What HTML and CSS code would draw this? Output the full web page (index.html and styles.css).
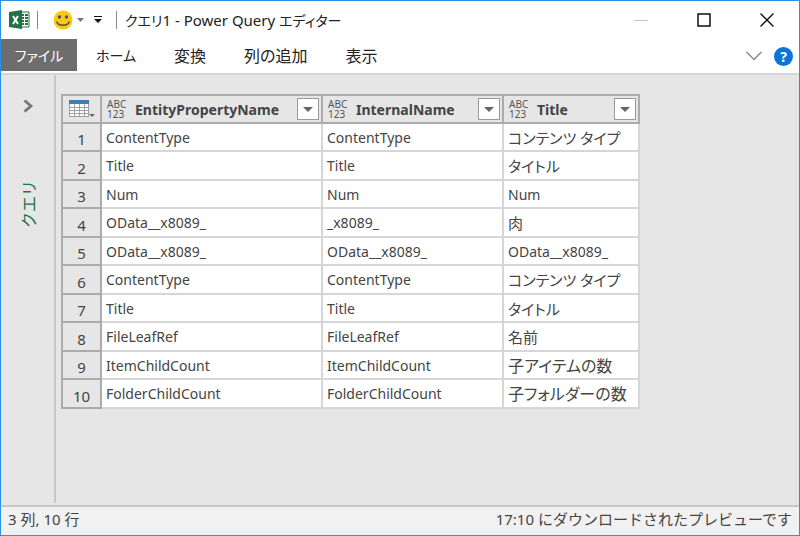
FILE: index.html
```html
<!DOCTYPE html>
<html lang="ja">
<head>
    <meta charset="UTF-8">
    <meta name="viewport" content="width=device-width, initial-scale=1.0">
    <title>クエリ1 - Power Query エディター</title>
    <link rel="stylesheet" href="styles.css">
</head>
<body>
    <div class="window">
        <header class="title-bar">
            <svg class="excel-icon" width="22" height="22" viewBox="0 0 22 22">
                <path d="M11 3h9v15h-9z" fill="#fff" stroke="#217346"/>
                <path d="M12 6h3M16 6h3M12 9h3M16 9h3M12 12h3M16 12h3M12 15h3M16 15h3" stroke="#217346" stroke-width="2"/>
                <path d="M0 3L13 1v19L0 18z" fill="#217346"/>
                <path d="M4 7l5 8M9 7l-5 8" stroke="#fff" stroke-width="2"/>
            </svg>
            <span class="separator"></span>
            <button class="smile-btn" aria-label="フィードバック">
                <svg width="32" height="20" viewBox="0 0 32 20">
                    <circle cx="10" cy="10" r="9.5" fill="#fdc811"/>
                    <circle cx="6.5" cy="7" r="1.7" fill="#505050"/>
                    <circle cx="13.5" cy="7" r="1.7" fill="#505050"/>
                    <path d="M3.5 11.5c2 5 11 5 13 0" fill="none" stroke="#505050" stroke-width="1.5"/>
                    <path d="M24 8h7l-3.500 4z" fill="#777"/>
                </svg>
            </button>
            <button class="quick-btn" aria-label="クイック アクセス">
                <svg width="8" height="8" viewBox="0 0 8 8">
                    <path d="M0 0h8v1H0zM0 3h8L4 7z" fill="#111"/>
                </svg>
            </button>
            <span class="separator"></span>
            <h1 class="title"><span class="kana">クエリ</span>1 - Power Query <span class="kana">エディター</span></h1>
            <div class="window-buttons">
                <button aria-label="最小化">
                    <svg width="14" height="14" viewBox="0 0 14 14"><path d="M0 7.500h14" stroke="#c4c4c4"/></svg>
                </button>
                <button aria-label="最大化">
                    <svg width="14" height="14" viewBox="0 0 14 14"><path d="M1 1h12v12H1z" fill="none" stroke="#111" stroke-width="1.500"/></svg>
                </button>
                <button aria-label="閉じる">
                    <svg width="14" height="14" viewBox="0 0 14 14"><path d="M.5.5l13 13M13.500.5l-13 13" stroke="#111" stroke-width="1.400"/></svg>
                </button>
            </div>
        </header>

        <nav class="ribbon">
            <button class="tab file kana">ファイル</button>
            <button class="tab kana">ホーム</button>
            <button class="tab">変換</button>
            <button class="tab">列の追加</button>
            <button class="tab">表示</button>
            <div class="ribbon-tools">
                <button aria-label="リボンの展開">
                    <svg width="16" height="10" viewBox="0 0 16 10"><path d="M.5 1L8 8.500 15.500 1" fill="none" stroke="#888" stroke-width="1.500"/></svg>
                </button>
                <button class="help-btn" aria-label="ヘルプ">?</button>
            </div>
        </nav>

        <main class="content">
            <aside class="query-pane">
                <button aria-label="展開">
                    <svg width="12" height="14" viewBox="0 0 12 14"><path d="M2.500 1.500L9 7l-6.500 5.500" fill="none" stroke="#777" stroke-width="2.800"/></svg>
                </button>
                <span class="pane-label">クエリ</span>
            </aside>
            <div class="preview">
                <table class="grid">
                    <colgroup>
                        <col class="col-num">
                        <col class="col-entity">
                        <col class="col-internal">
                        <col class="col-title">
                    </colgroup>
                    <thead>
                        <tr>
                            <th class="corner">
                                <button aria-label="テーブル">
                                    <svg width="26" height="18" viewBox="0 0 26 18">
                                        <path d="M0 0h20v17H0z" fill="#a0a0a0"/>
                                        <path d="M0 0h20v4H0z" fill="#3d7ebb"/>
                                        <path d="M1 4h4v3H1zM6 4h4v3H6zM11 4h4v3h-4zM16 4h3v3h-3zM1 8h4v2H1zM6 8h4v2H6zM11 8h4v2h-4zM16 8h3v2h-3zM1 11h4v2H1zM6 11h4v2H6zM11 11h4v2h-4zM16 11h3v2h-3zM1 14h4v2H1zM6 14h4v2H6zM11 14h4v2h-4zM16 14h3v2h-3z" fill="#fff"/>
                                        <path d="M20 14h6l-3 3z" fill="#666"/>
                                    </svg>
                                </button>
                            </th>
                            <th>
                                <div class="head">
                                    <span class="type">ABC<br>123</span>
                                    <span class="name">EntityPropertyName</span>
                                    <button class="filter" aria-label="フィルター"></button>
                                </div>
                            </th>
                            <th>
                                <div class="head">
                                    <span class="type">ABC<br>123</span>
                                    <span class="name">InternalName</span>
                                    <button class="filter" aria-label="フィルター"></button>
                                </div>
                            </th>
                            <th>
                                <div class="head">
                                    <span class="type">ABC<br>123</span>
                                    <span class="name">Title</span>
                                    <button class="filter" aria-label="フィルター"></button>
                                </div>
                            </th>
                        </tr>
                    </thead>
                    <tbody>
                        <tr><th>1</th><td>ContentType</td><td>ContentType</td><td class="jp">コンテンツ タイプ</td></tr>
                        <tr><th>2</th><td>Title</td><td>Title</td><td class="jp">タイトル</td></tr>
                        <tr><th>3</th><td>Num</td><td>Num</td><td>Num</td></tr>
                        <tr><th>4</th><td>OData__x8089_</td><td>_x8089_</td><td class="jp">肉</td></tr>
                        <tr><th>5</th><td>OData__x8089_</td><td>OData__x8089_</td><td>OData__x8089_</td></tr>
                        <tr><th>6</th><td>ContentType</td><td>ContentType</td><td class="jp">コンテンツ タイプ</td></tr>
                        <tr><th>7</th><td>Title</td><td>Title</td><td class="jp">タイトル</td></tr>
                        <tr><th>8</th><td>FileLeafRef</td><td>FileLeafRef</td><td class="jp">名前</td></tr>
                        <tr><th>9</th><td>ItemChildCount</td><td>ItemChildCount</td><td class="jp wide">子アイテムの数</td></tr>
                        <tr><th>10</th><td>FolderChildCount</td><td>FolderChildCount</td><td class="jp wide">子フォルダーの数</td></tr>
                    </tbody>
                </table>
            </div>
        </main>

        <footer class="status-bar">
            <span>3 列, 10 行</span>
            <span>17:10 にダウンロードされたプレビューです</span>
        </footer>
    </div>
</body>
</html>
```
FILE: styles.css
```css
* {
    box-sizing: border-box;
    margin: 0;
    padding: 0;
}

body {
    font-family: "Noto Sans", "Noto Sans CJK JP", sans-serif;
    font-size: 15px;
    font-feature-settings: "palt";
    color: #222;
}

button {
    display: flex;
    align-items: center;
    justify-content: center;
    background: none;
    border: none;
    font: inherit;
    color: inherit;
    font-feature-settings: inherit;
}

.window {
    display: flex;
    flex-direction: column;
    min-height: 100vh;
    border: 1px solid #2b90e8;
    background: #fff;
}

.title-bar {
    display: flex;
    align-items: center;
    height: 38px;
    padding: 0 25px 0 8px;
}

.separator {
    width: 1px;
    height: 18px;
    background: #888;
}

.excel-icon {
    margin-right: 6px;
}

.smile-btn {
    margin-left: 15px;
}

.quick-btn {
    margin: 0 14px 0 9px;
}

.title {
    margin-left: 8px;
    font-size: 15px;
    font-weight: normal;
    line-height: 20px;
    white-space: nowrap;
}

.window-buttons {
    display: flex;
    gap: 49px;
    margin-left: auto;
}

.ribbon {
    display: flex;
    height: 36px;
    border-bottom: 2px solid #d6d6d6;
}

.tab {
    height: 32px;
    padding: 0 19px;
    font-size: 16px;
    white-space: nowrap;
}

.tab.file {
    width: 76px;
    padding: 0;
    background: #6d6d6d;
    color: #fff;
}

.kana,
.tab.kana {
    font-size: 14px;
}

.ribbon-tools {
    display: flex;
    align-items: center;
    gap: 12px;
    margin-left: auto;
    padding-right: 6px;
}

.help-btn {
    width: 19px;
    height: 19px;
    border-radius: 50%;
    background: #0a74d8;
    color: #fff;
    font-size: 14px;
    font-weight: bold;
}

.content {
    display: flex;
    flex: 1;
    background: #e6e6e6;
}

.query-pane {
    display: flex;
    flex-direction: column;
    align-items: center;
    gap: 67px;
    width: 55px;
    margin-bottom: 2px;
    padding-top: 24px;
    border-right: 2px solid #c8c8c8;
}

.pane-label {
    writing-mode: vertical-rl;
    text-orientation: sideways;
    transform: rotate(180deg);
    font-family: "Noto Sans CJK JP", sans-serif;
    font-feature-settings: normal;
    font-size: 16px;
    color: #217346;
}

.preview {
    flex: 1;
    padding: 19px 5px;
}

.grid {
    table-layout: fixed;
    width: 579px;
    border-collapse: separate;
    border-spacing: 0;
    border-top: 2px solid #ababab;
    color: #444;
}

.col-num { width: 41px; }
.col-entity { width: 221px; }
.col-internal { width: 181px; }
.col-title { width: 136px; }

.grid th {
    height: 28px;
    border-right: 2px solid #ababab;
    border-bottom: 2px solid #ababab;
}

.grid .corner {
    border-left: 2px solid #ababab;
}

.corner button {
    margin-left: 6px;
}

.head {
    display: flex;
    align-items: center;
    padding: 0 2px 0 5px;
    font-size: 14px;
}

.type {
    width: 28px;
    font-size: 10px;
    font-weight: normal;
    line-height: 10px;
    text-align: left;
    color: #555;
}

.filter {
    width: 22px;
    height: 22px;
    margin-left: auto;
    border: 1px solid #999;
    background: #fff;
}

.filter::before {
    content: "";
    border: 5px solid transparent;
    border-top-color: #666;
    border-bottom: none;
}

.grid tbody th {
    border-left: 2px solid #ababab;
    padding-top: 4px;
    font-size: 15px;
    font-weight: normal;
    line-height: 20px;
}

.grid td {
    height: 28px;
    padding: 1px 4px 0;
    border-right: 2px solid #d6d6d6;
    border-bottom: 2px solid #d6d6d6;
    background: #fff;
    font-size: 14px;
    line-height: 20px;
    white-space: nowrap;
}

.grid tbody tr:nth-child(even) > * {
    height: 29px;
}

.grid .jp {
    font-size: 15px;
}

.grid .wide {
    font-size: 16px;
}

.status-bar {
    display: flex;
    align-items: center;
    justify-content: space-between;
    height: 30px;
    padding: 0 7px 4px;
    border-top: 2px solid #c8c8c8;
    background: #f1f1f1;
    font-size: 15px;
    line-height: 20px;
    font-feature-settings: normal;
    color: #444;
}
```
